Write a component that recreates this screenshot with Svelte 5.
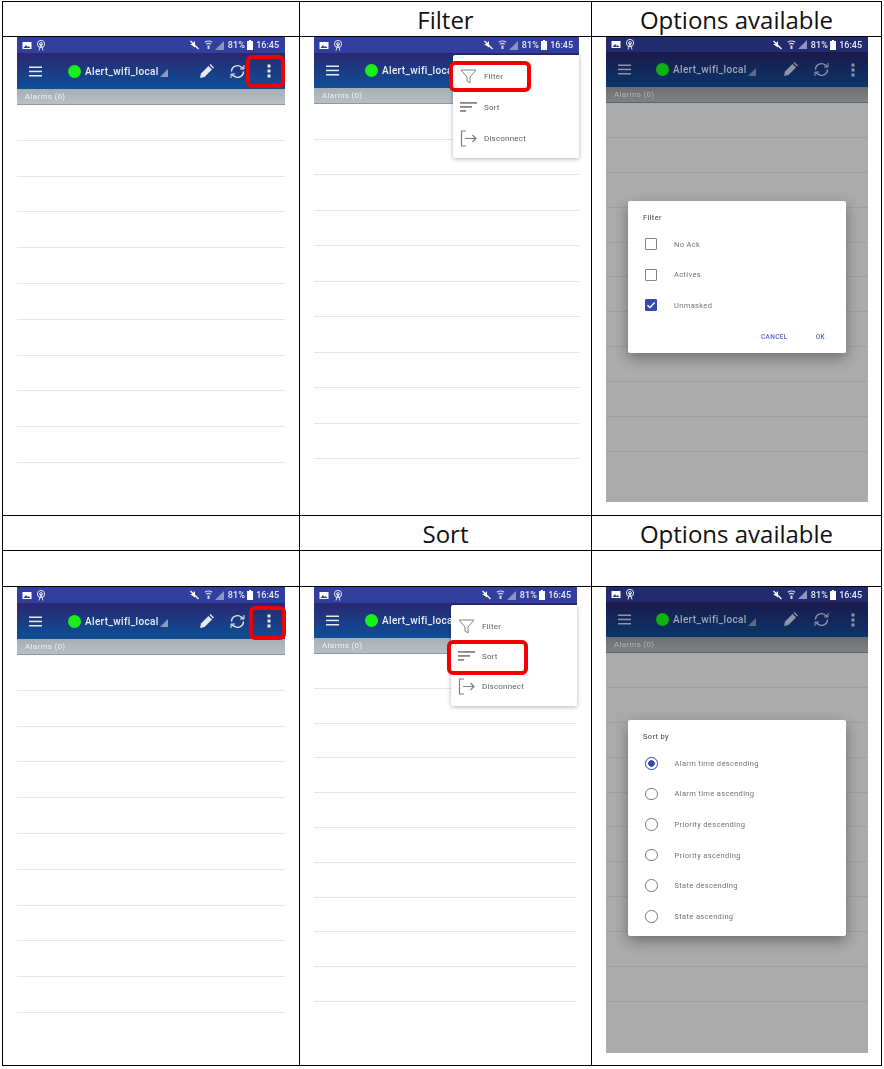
<script>
	const filterOptions = [
		{ label: 'No Ack', checked: false },
		{ label: 'Actives', checked: false },
		{ label: 'Unmasked', checked: true }
	];
	const sortOptions = [
		'Alarm time descending',
		'Alarm time ascending',
		'Priority descending',
		'Priority ascending',
		'State descending',
		'State ascending'
	];
	const rows = Array.from({ length: 10 });
</script>

{#snippet statusbar()}
	<div class="status">
		<svg class="ic" width="10" height="9" viewBox="0 0 10 9"><rect x="0.5" y="1" width="9" height="7" fill="#fff" /><path d="M1.5 7l2.5-3 1.5 2 1-1 2 2z" fill="#333f9f" /></svg>
		<svg class="ic tower" width="10" height="11" viewBox="0 0 10 11" fill="none" stroke="#e6e6f2" stroke-width="1"><circle cx="5" cy="4" r="3.6" /><circle cx="5" cy="4" r="1.4" /><path d="M5 4L3 10.5M5 4l2 6.5" /></svg>
		<span class="grow"></span>
		<svg class="ic" width="10" height="10" viewBox="0 0 10 10"><path d="M1 4h2l3-3v6.5z" fill="#fff" /><path d="M1.5 1l8 8" stroke="#fff" stroke-width="1.2" /></svg>
		<svg class="ic wifi" width="9" height="10" viewBox="0 0 9 10" fill="none" stroke="#d8d8e8" stroke-width="1.2"><path d="M0.8 2.2q3.7-2.4 7.4 0M2.2 4.2q2.3-1.5 4.6 0" /><path d="M4.5 5.5v3.5" stroke-width="2" /></svg>
		<svg class="ic" width="9" height="9" viewBox="0 0 9 9"><path d="M9 0v9H0z" fill="#8f93bd" /></svg>
		<span class="pct">81%</span>
		<svg class="ic" width="6" height="10" viewBox="0 0 6 10"><path d="M2 0h2v1h2v9H0V1h2z" fill="#fff" /></svg>
		<span class="time">16:45</span>
	</div>
{/snippet}

{#snippet appbar()}
	<div class="appbar">
		<svg class="burger" width="13" height="11" viewBox="0 0 13 11"><rect y="0.5" width="13" height="1.5" /><rect y="4.7" width="13" height="1.5" /><rect y="9" width="13" height="1.5" /></svg>
		<span class="dot"></span>
		<span class="title">Alert_wifi_local</span>
		<svg class="tri" width="8" height="8" viewBox="0 0 8 8"><path d="M8 0v8H0z" /></svg>
		<span class="grow"></span>
		<svg class="pencil" width="15" height="15" viewBox="0 0 15 15"><path d="M1 14l1-4.5 7.5-7.5 3.5 3.5L5.500 13z" /><path d="M10.500 1l1-1 3.500 3.500-1 1z" /></svg>
		<svg class="sync" width="15" height="15" viewBox="0 0 15 15" fill="none" stroke-width="1.4"><path d="M1.500 7.500a6 6 0 0 1 10-4.300l2 1.300" /><path d="M13.500 7.500a6 6 0 0 1-10 4.300l-2-1.300" /><path d="M14 1v4h-4M1 14v-4h4" stroke-width="1" /></svg>
		<svg class="kebab" width="4" height="14" viewBox="0 0 4 14"><rect x="0.500" y="0.500" width="3" height="3" /><rect x="0.500" y="5.500" width="3" height="3" /><rect x="0.500" y="10.500" width="3" height="3" /></svg>
	</div>
	<div class="alarms">Alarms (0)</div>
{/snippet}

{#snippet menu()}
	<div class="menu">
		<div class="menu-item">
			<svg width="17" height="15" viewBox="0 0 17 15" fill="none" stroke="#808080" stroke-width="1"><path d="M1 1h15l-6 7v6l-3-2V8z" /></svg>
			<span>Filter</span>
		</div>
		<div class="menu-item">
			<svg width="17" height="15" viewBox="0 0 17 15" fill="#858585"><rect y="2" width="17" height="1.800" /><rect y="6" width="12" height="1.800" /><rect y="10" width="6" height="1.800" /></svg>
			<span>Sort</span>
		</div>
		<div class="menu-item">
			<svg width="17" height="17" viewBox="0 0 17 17" fill="none" stroke="#808080" stroke-width="1.200"><path d="M6 1H1.500v15H6" /><path d="M5 8.500h11M12.500 5l3.500 3.500-3.500 3.500" /></svg>
			<span>Disconnect</span>
		</div>
	</div>
{/snippet}

{#snippet filterDialog()}
	<div class="dialog filter">
		<div class="dlg-title">Filter</div>
		{#each filterOptions as opt}
			<div class="opt">
				<span class="box" class:checked={opt.checked}>
					{#if opt.checked}
						<svg width="10" height="10" viewBox="0 0 10 10" fill="none" stroke="#fff" stroke-width="1.400"><path d="M1.500 5.200l2.400 2.300 4.800-5" /></svg>
					{/if}
				</span>
				<span>{opt.label}</span>
			</div>
		{/each}
		<div class="actions">
			<span>CANCEL</span>
			<span>OK</span>
		</div>
	</div>
{/snippet}

{#snippet sortDialog()}
	<div class="dialog sort">
		<div class="dlg-title">Sort by</div>
		{#each sortOptions as label, i}
			<div class="opt">
				<span class="radio" class:on={i === 0}></span>
				<span>{label}</span>
			</div>
		{/each}
	</div>
{/snippet}

<div class="sheet">
	<div class="cell head"></div>
	<div class="cell head">Filter</div>
	<div class="cell head">Options available</div>

	<div class="cell shot">
		<div class="phone p1a">
			{@render statusbar()}
			{@render appbar()}
			<div class="rows">{#each rows as _}<div class="row"></div>{/each}</div>
			<div class="mark kebab-a"></div>
		</div>
	</div>
	<div class="cell shot">
		<div class="phone p2a">
			{@render statusbar()}
			{@render appbar()}
			<div class="rows">{#each rows as _}<div class="row"></div>{/each}</div>
			{@render menu()}
			<div class="mark filter-a"></div>
		</div>
	</div>
	<div class="cell shot">
		<div class="phone p3a dim">
			{@render statusbar()}
			{@render appbar()}
			<div class="rows">{#each rows as _}<div class="row"></div>{/each}</div>
			{@render filterDialog()}
		</div>
	</div>

	<div class="cell head"></div>
	<div class="cell head">Sort</div>
	<div class="cell head">Options available</div>

	<div class="cell head"></div>
	<div class="cell head"></div>
	<div class="cell head"></div>

	<div class="cell shot">
		<div class="phone p1b">
			{@render statusbar()}
			{@render appbar()}
			<div class="rows">{#each rows as _}<div class="row"></div>{/each}</div>
			<div class="mark kebab-b"></div>
		</div>
	</div>
	<div class="cell shot">
		<div class="phone p2b">
			{@render statusbar()}
			{@render appbar()}
			<div class="rows">{#each rows as _}<div class="row"></div>{/each}</div>
			{@render menu()}
			<div class="mark sort-b"></div>
		</div>
	</div>
	<div class="cell shot">
		<div class="phone p3b dim">
			{@render statusbar()}
			{@render appbar()}
			<div class="rows">{#each rows as _}<div class="row"></div>{/each}</div>
			{@render sortDialog()}
		</div>
	</div>
</div>

<style>
	:global(body) {
		background: #fff;
	}

	.sheet {
		display: grid;
		grid-template-columns: 296px 291px 289px;
		grid-template-rows: 34px 478px 34px 35px 478px;
		gap: 1px;
		width: 880px;
		margin: 1px 0 0 2px;
		padding: 1px;
		box-sizing: border-box;
		background: #000;
		font-family: "Open Sans", "Liberation Sans", sans-serif;
	}

	.cell {
		background: #fff;
		min-width: 0;
	}

	.head {
		display: flex;
		align-items: center;
		justify-content: center;
		font-size: 24px;
		color: #111;
	}

	.shot {
		padding-left: 14px;
		overflow: hidden;
	}

	.phone {
		position: relative;
		font-family: Roboto, "Liberation Sans", sans-serif;
		background: #fff;
		filter: blur(0.35px);
		--status: #333f9f;
		--bar-top: #2a2870;
		--bar-bottom: #0d4f97;
		--alarm-top: #a6afb6;
		--alarm-bottom: #b9bfc4;
		--alarm-line: #8d979f;
		--alarm-text: #eef0f2;
		--row-line: #e6e6e6;
		--green: #19f019;
		--icon: #e8eaf2;
		--tri: #8f9bb8;
		--bar-h: 36px;
		--pad-top: 16px;
		--dot-gap: 26px;
		--kebab-gap: 14px;
	}

	.dim {
		background: #ababab;
		--status: #232b70;
		--bar-top: #1c1a4c;
		--bar-bottom: #0a3569;
		--alarm-top: #6c6f72;
		--alarm-bottom: #7f8285;
		--alarm-line: #5f6468;
		--alarm-text: #b0b3b5;
		--row-line: #9f9f9f;
		--green: #0fb30f;
		--icon: #8f94a6;
		--tri: #5f6a80;
		--bar-h: 35px;
		--pad-top: 15px;
		--dot-gap: 25px;
		--kebab-gap: 13px;
	}

	.p1a { width: 268px; height: 477px; --row-h: 35.800px; }
	.p2a { width: 265px; height: 477px; --row-h: 35.500px; --bar-h: 35px; --menu-h: 103px; }
	.p3a { width: 262px; height: 465px; --row-h: 34.900px; }
	.p1b { width: 268px; height: 477px; --row-h: 35.800px; }
	.p2b { width: 263px; height: 477px; --row-h: 34.800px; --bar-h: 35px; --menu-h: 101px; }
	.p3b { width: 262px; height: 466px; --row-h: 34.900px; }

	.status {
		display: flex;
		align-items: center;
		height: var(--pad-top);
		padding: 0 6px 0 5px;
		background: var(--status);
		color: #e8e8f4;
		font-size: 9px;
		font-weight: 500;
	}

	.status .ic { margin-right: 2px; flex: none; }
	.status .tower { margin-left: 2px; }
	.status .wifi { margin-left: 3px; }
	.status .pct { margin-left: 2px; margin-right: 2px; letter-spacing: 0.2px; }
	.status .time { margin-left: 1px; }

	.grow { flex: 1; }

	.appbar {
		display: flex;
		align-items: center;
		height: var(--bar-h);
		padding-left: 12px;
		background: linear-gradient(var(--bar-top), var(--bar-bottom));
		color: #eceef6;
	}

	.dim .appbar { color: #a2a5b4; }

	.appbar svg { fill: var(--icon); stroke: none; }
	.appbar .sync { fill: none; stroke: var(--icon); }
	.appbar .tri { fill: var(--tri); }

	.dot {
		width: 13px;
		height: 13px;
		margin-left: var(--dot-gap);
		border-radius: 50%;
		background: var(--green);
		flex: none;
	}

	.title {
		margin-left: 4px;
		font-size: 10px;
		font-weight: 500;
		letter-spacing: 0.35px;
		white-space: nowrap;
	}

	.tri { margin: 4px 0 0 1px; flex: none; }
	.pencil { margin-right: 16px; flex: none; }
	.sync { margin-right: 22px; flex: none; }
	.kebab { margin-right: var(--kebab-gap); flex: none; }

	.alarms {
		height: 15px;
		padding-left: 8px;
		line-height: 15px;
		border-bottom: 1px solid var(--alarm-line);
		background: linear-gradient(var(--alarm-top), var(--alarm-bottom));
		color: var(--alarm-text);
		font-size: 8px;
		letter-spacing: 0.3px;
	}

	.row {
		height: var(--row-h);
		box-sizing: border-box;
		border-bottom: 1px solid var(--row-line);
	}

	/* popup menu, hangs over the app bar */
	.menu {
		position: absolute;
		top: 18px;
		right: 0;
		width: 126px;
		height: var(--menu-h);
		box-sizing: border-box;
		padding: 6px 0 4px 7px;
		display: flex;
		flex-direction: column;
		background: #fff;
		border-radius: 2px 0 0 2px;
		box-shadow: 0 1px 4px rgba(0, 0, 0, 0.3);
		color: #5f5f5f;
		font-size: 8px;
		letter-spacing: 0.2px;
	}

	.menu-item {
		flex: 1;
		display: flex;
		align-items: center;
		gap: 7px;
	}

	.menu-item svg { flex: none; }

	.dialog {
		position: absolute;
		left: 22px;
		width: 218px;
		box-sizing: border-box;
		padding: 11px 15px 0;
		background: #fff;
		border-radius: 2px;
		box-shadow: 0 5px 14px rgba(0, 0, 0, 0.35);
		color: #737373;
		font-size: 7.500px;
		letter-spacing: 0.35px;
	}

	.dialog.filter { top: 164px; height: 152px; }
	.dialog.sort { top: 133px; height: 216px; }

	.dlg-title {
		height: 12px;
		line-height: 12px;
		color: #444;
		margin-bottom: 5px;
	}

	.opt {
		display: flex;
		align-items: center;
		gap: 17px;
		height: 30.600px;
		padding-left: 2px;
	}

	.box {
		width: 12px;
		height: 12px;
		box-sizing: border-box;
		border: 1.500px solid #858585;
		border-radius: 1px;
		flex: none;
		display: flex;
		align-items: center;
		justify-content: center;
	}

	.box.checked {
		background: #3649b3;
		border-color: #3649b3;
	}

	.radio {
		width: 12.500px;
		height: 12.500px;
		box-sizing: border-box;
		border: 1.300px solid #7b7b7b;
		border-radius: 50%;
		flex: none;
	}

	.radio.on {
		border-color: #3649c0;
		background: radial-gradient(circle, #3649b3 0 3px, #fff 3.500px);
	}

	.actions {
		display: flex;
		justify-content: flex-end;
		gap: 28px;
		margin-top: 12px;
		padding-right: 6px;
		color: #5a68c8;
		font-size: 6.500px;
		font-weight: 500;
	}

	/* red annotation boxes drawn on top of the screenshots */
	.mark {
		position: absolute;
		box-sizing: border-box;
		border: 4px solid #f00000;
		border-radius: 6px;
	}

	.kebab-a { left: 229px; top: 18px; width: 39px; height: 33px; }
	.kebab-b { left: 232px; top: 19px; width: 37px; height: 34px; }
	.filter-a { left: 135px; top: 24px; width: 82px; height: 31px; }
	.sort-b { left: 133px; top: 53px; width: 81px; height: 35px; }
</style>
